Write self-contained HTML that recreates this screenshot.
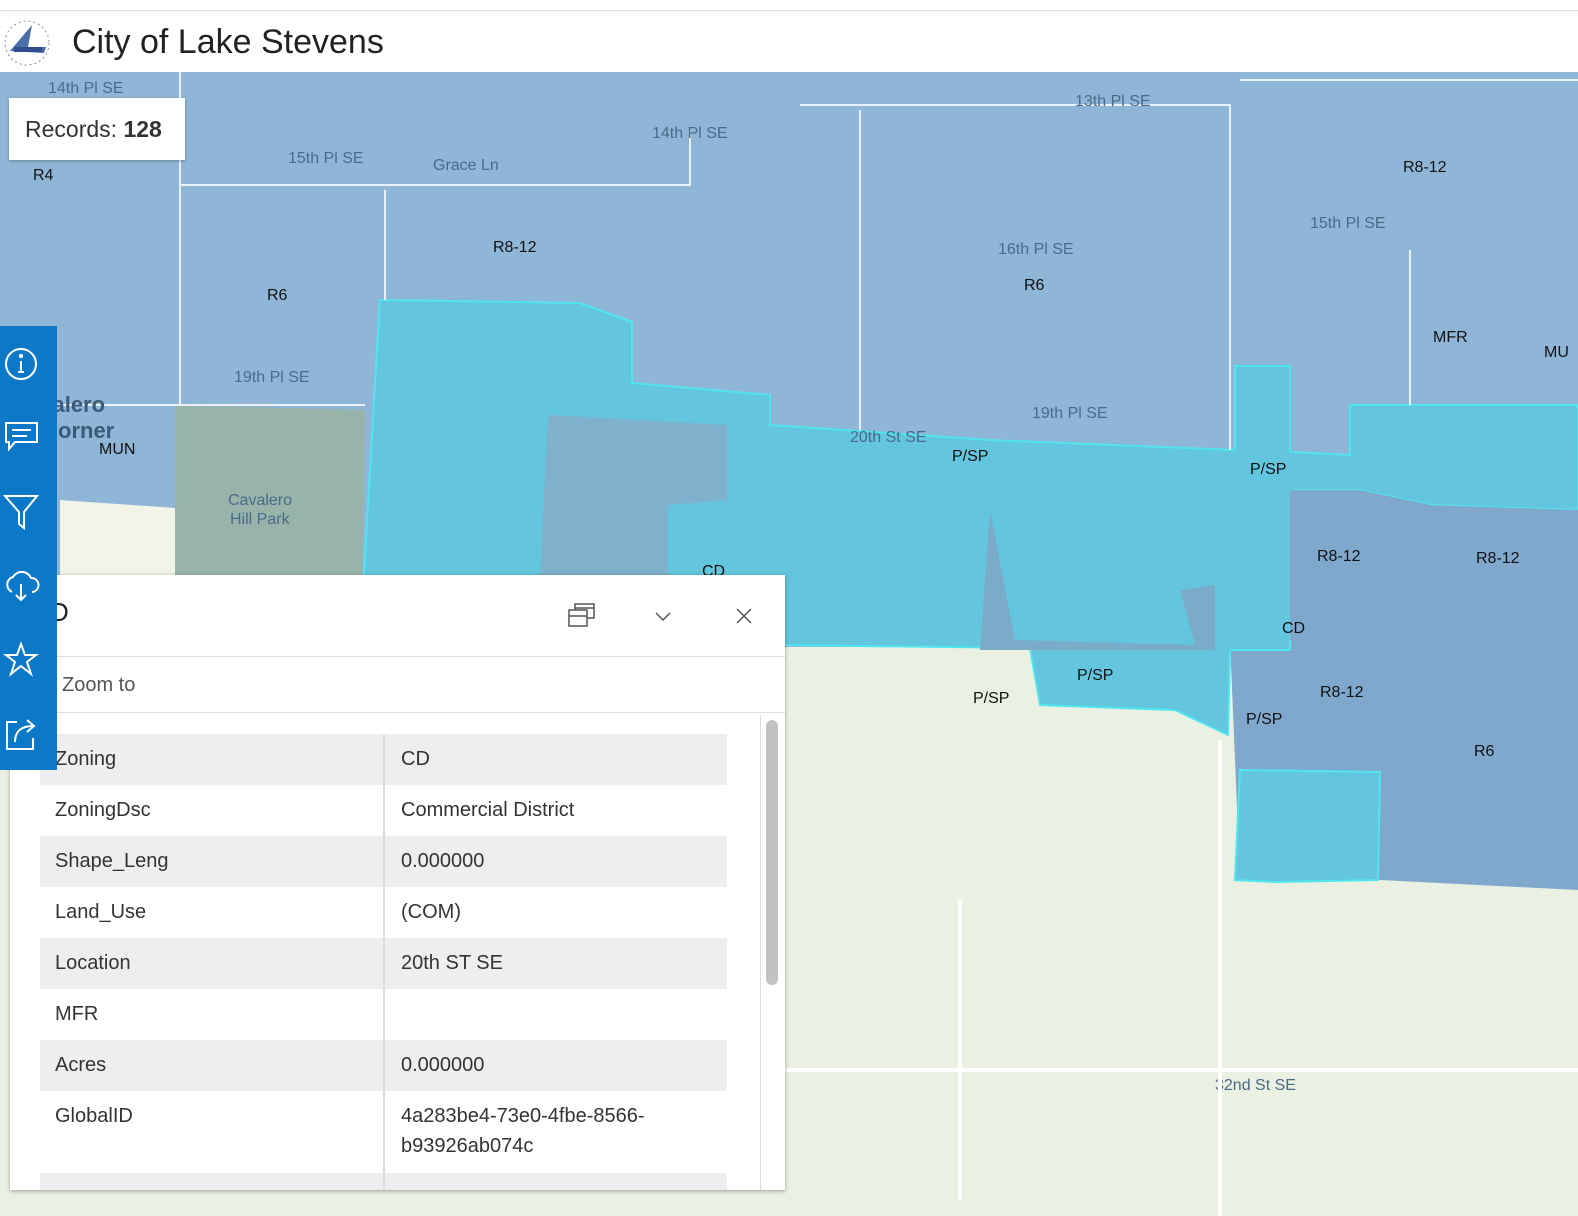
<!DOCTYPE html>
<html><head><meta charset="utf-8"><style>
body{margin:0;width:1578px;height:1216px;overflow:hidden;background:#fff;font-family:"Liberation Sans",sans-serif;position:relative}
.hdr{position:absolute;left:0;top:10px;width:1578px;height:62px;background:#fff;border-top:1px solid #ddd}
.hdr .t{position:absolute;left:72px;top:12px;font-size:34px;color:#222}
svg.map{position:absolute;left:0;top:72px}
.lbl{font-family:"Liberation Sans",sans-serif;font-size:16px;fill:#111}
.st{font-family:"Liberation Sans",sans-serif;font-size:16px;fill:#4a6a8a}
.rec{position:absolute;left:9px;top:98px;width:176px;height:62px;background:#fff;box-shadow:0 1px 3px rgba(0,0,0,.3);font-size:23px;color:#333;line-height:62px;text-indent:16px}
.side{position:absolute;left:0;top:326px;width:57px;height:444px;background:#0b79c8}
.side svg{position:absolute;left:3px}
.pop{position:absolute;left:10px;top:575px;width:775px;height:615px;background:#fff;box-shadow:0 1px 4px rgba(0,0,0,.35)}
.row{position:absolute;left:30px;width:687px;height:51px;font-size:20px;color:#333}
.row span{position:absolute;top:14px}
</style></head><body>
<div class="hdr">
<svg width="54" height="54" style="position:absolute;left:2px;top:6px"><circle cx="25" cy="26" r="22" fill="none" stroke="#889" stroke-dasharray="2 3"/><path d="M8 34 L30 8 L26 30 L44 30 L42 36 Z" fill="#4a6ea8"/><rect x="12" y="30" width="28" height="5" fill="#2c4f8c"/></svg>
<div class="t">City of Lake Stevens</div></div>
<svg class="map" width="1578" height="1144" viewBox="0 72 1578 1144">
<rect x="0" y="72" width="1578" height="1144" fill="#eaf0e2"/>
<rect x="0" y="72" width="1578" height="575" fill="#8fb6d6"/>
<polygon points="1230,640 1578,640 1578,890 1380,880 1240,880" fill="#7fa8cc"/>
<polygon points="60,500 175,508 175,580 60,580" fill="#f3f4e8"/>
<polygon points="175,405 365,410 362,580 175,580" fill="#97b3aa"/>
<polygon points="380,300 580,303 632,322 632,383 770,395 770,425 990,440 1235,450 1235,366 1290,366 1290,452 1350,455 1350,405 1578,405 1578,510 1430,505 1360,490 1295,490 1290,650 1230,650 1228,735 1175,710 1040,705 1030,648 780,645 650,640 360,640" fill="#63c6de" stroke="#4fe6f0" stroke-width="2"/>
<polygon points="548,415 727,425 727,500 668,505 668,575 540,575" fill="#7fb0cc"/>
<polygon points="990,510 1015,640 1195,645 1180,590 1215,585 1215,650 1040,650 980,650" fill="#7aacca"/>
<polygon points="1240,770 1380,772 1378,880 1275,882 1235,880" fill="#63c6de" stroke="#4fe6f0" stroke-width="2"/>
<polygon points="1290,490 1360,490 1430,505 1578,510 1578,640 1290,640" fill="#7fa8cc"/>
<g stroke="#fff" stroke-width="2" fill="none" opacity=".8">
<path d="M180 72V405M0 405H365M180 185H690V130M800 105H1230V450M1240 80H1578M385 190V300M860 110V430M1410 250V405"/>
</g>
<g class="st"><text x="48" y="93">14th Pl SE</text><text x="288" y="163">15th Pl SE</text><text x="433" y="170">Grace Ln</text><text x="652" y="138">14th Pl SE</text><text x="1075" y="106">13th Pl SE</text><text x="998" y="254">16th Pl SE</text><text x="1310" y="228">15th Pl SE</text><text x="234" y="382">19th Pl SE</text><text x="1032" y="418">19th Pl SE</text><text x="850" y="442">20th St SE</text><text x="1215" y="1090">32nd St SE</text><text x="228" y="505">Cavalero</text><text x="230" y="524">Hill Park</text></g>
<text x="28" y="412" font-size="22" font-weight="bold" fill="#3a5a7a">avalero</text><text x="58" y="438" font-size="22" font-weight="bold" fill="#3a5a7a">orner</text>
<g class="lbl"><text x="33" y="180">R4</text><text x="493" y="252">R8-12</text><text x="267" y="300">R6</text><text x="1024" y="290">R6</text><text x="1403" y="172">R8-12</text><text x="1433" y="342">MFR</text><text x="1544" y="357">MU</text><text x="99" y="454">MUN</text><text x="952" y="461">P/SP</text><text x="1250" y="474">P/SP</text><text x="702" y="576">CD</text><text x="1317" y="561">R8-12</text><text x="1476" y="563">R8-12</text><text x="1282" y="633">CD</text><text x="1077" y="680">P/SP</text><text x="973" y="703">P/SP</text><text x="1320" y="697">R8-12</text><text x="1246" y="724">P/SP</text><text x="1474" y="756">R6</text></g>
<path d="M1220 740V1216M780 1070H1578M960 1200V900" stroke="#fff" stroke-width="4" fill="none"/>
</svg>
<div class="rec">Records: <b>128</b></div>
<div class="pop">
<div style="position:absolute;left:40px;top:22px;font-size:26px;color:#222">D</div>
<svg width="30" height="30" style="position:absolute;left:557px;top:25px" fill="none" stroke="#555" stroke-width="1.5"><rect x="2" y="10" width="18" height="16"/><path d="M2 16H20M8 10V4H27V18H20M8 8H27"/></svg>
<svg width="20" height="20" style="position:absolute;left:643px;top:32px" fill="none" stroke="#555" stroke-width="1.5"><path d="M3 6L10 13L17 6"/></svg>
<svg width="20" height="20" style="position:absolute;left:724px;top:31px" fill="none" stroke="#555" stroke-width="1.5"><path d="M3 3L17 17M17 3L3 17"/></svg>
<div style="position:absolute;left:0;top:81px;width:775px;height:1px;background:#ddd"></div>
<div style="position:absolute;left:52px;top:99px;font-size:20px;color:#555">Zoom to</div>
<div style="position:absolute;left:0;top:137px;width:775px;height:1px;background:#ddd"></div>
<div style="position:absolute;left:750px;top:140px;width:25px;height:475px;border-left:1px solid #ddd"></div>
<div style="position:absolute;left:756px;top:145px;width:12px;height:265px;background:#c2c2c2;border-radius:6px"></div>
<div class="row" style="top:159px;background:#eee"><span style="left:15px">Zoning</span><span style="left:361px">CD</span></div>
<div class="row" style="top:210px"><span style="left:15px">ZoningDsc</span><span style="left:361px">Commercial District</span></div>
<div class="row" style="top:261px;background:#eee"><span style="left:15px">Shape_Leng</span><span style="left:361px">0.000000</span></div>
<div class="row" style="top:312px"><span style="left:15px">Land_Use</span><span style="left:361px">(COM)</span></div>
<div class="row" style="top:363px;background:#eee"><span style="left:15px">Location</span><span style="left:361px">20th ST SE</span></div>
<div class="row" style="top:414px"><span style="left:15px">MFR</span></div>
<div class="row" style="top:465px;background:#eee"><span style="left:15px">Acres</span><span style="left:361px">0.000000</span></div>
<div class="row" style="top:516px;height:82px"><span style="left:15px">GlobalID</span><span style="left:361px;line-height:30px;top:10px">4a283be4-73e0-4fbe-8566-<br>b93926ab074c</span></div>
<div class="row" style="top:598px;height:17px;background:#eee"></div>
<div style="position:absolute;left:373px;top:159px;width:2px;height:456px;background:#ddd"></div>
</div>
<div class="side">
<svg width="40" height="40" style="top:19px" fill="none" stroke="#fff" stroke-width="2"><circle cx="18" cy="19" r="15"/><path d="M18 16V27M15 27H21"/><circle cx="18" cy="11" r="1.2" fill="#fff"/></svg>
<svg width="40" height="40" style="top:92px" fill="none" stroke="#fff" stroke-width="2"><path d="M3 5H34V24H12L6 31V24H3Z"/><path d="M9 12H28M9 18H24"/></svg>
<svg width="40" height="40" style="top:166px" fill="none" stroke="#fff" stroke-width="2"><path d="M2 4H34L21 20V36L16 32V20Z"/></svg>
<svg width="40" height="40" style="top:240px" fill="none" stroke="#fff" stroke-width="2"><path d="M9 26A8 8 0 0 1 10 11A10 10 0 0 1 28 12A7 7 0 0 1 29 26"/><path d="M18 18V34M13 29L18 34L23 29"/></svg>
<svg width="40" height="40" style="top:315px" fill="none" stroke="#fff" stroke-width="2"><path d="M18 3L22 14H33L24 21L28 33L18 25L8 33L12 21L3 14H14Z"/></svg>
<svg width="40" height="40" style="top:388px" fill="none" stroke="#fff" stroke-width="2"><path d="M14 8H4V35H30V24"/><path d="M12 28C12 16 20 12 30 12M24 6L31 12L24 18"/></svg>
</div>
</body></html>
